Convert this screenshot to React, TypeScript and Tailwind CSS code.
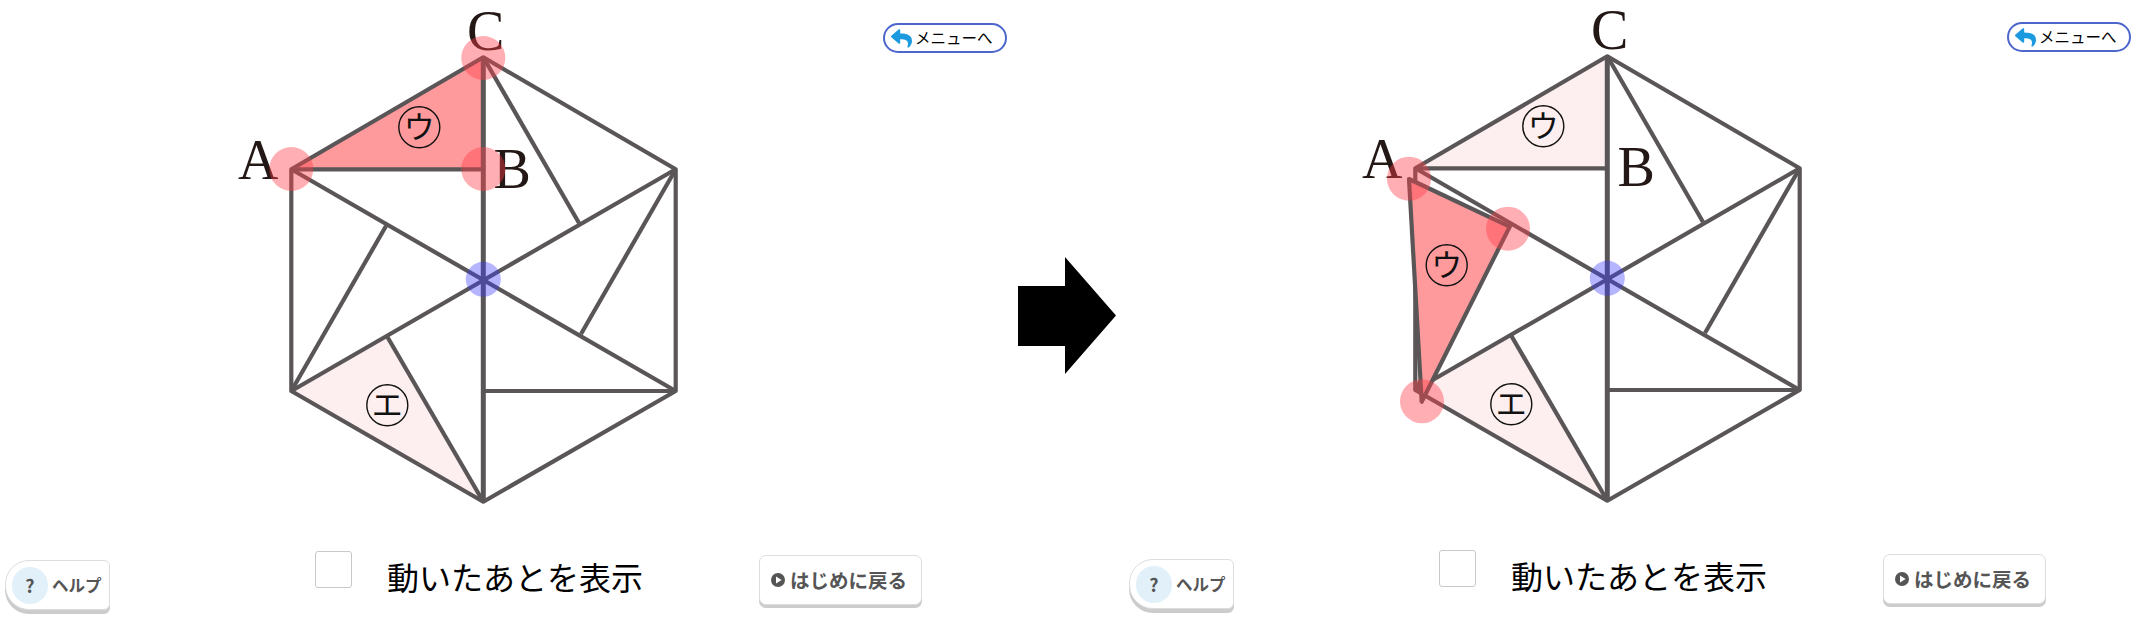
import React from 'react';
import { FaReply } from 'react-icons/fa';

const serif = '"Liberation Serif", serif';
const jp = '"Noto Sans CJK JP", "Noto Sans", sans-serif';

const LINE = '#5a5657';

// hexagon outline plus every fold line, in page pixels of the left panel
const HEX = '291.3,169.3 483.3,57.3 675.7,169.3 675.7,391 483.3,501.7 291.3,391';
const SEGMENTS = [
  [483.3, 57.3, 483.3, 501.7],
  [291.3, 169.3, 675.7, 391],
  [675.7, 169.3, 291.3, 391],
  [291.3, 169.3, 483.3, 169.3],
  [483.3, 57.3, 579, 223],
  [675.7, 169.3, 581, 334],
  [675.7, 391, 483.3, 391],
  [483.3, 501.7, 387.3, 336.7],
  [291.3, 391, 386, 226],
];

const TRI_U = '291.3,169.3 483.3,57.3 483.3,169.3';
const TRI_E = '291.3,391 387.3,336.7 483.3,501.7';

const Kana = ({ x, y, ch }: { x: number; y: number; ch: string }) => (
  <g>
    <circle cx={x} cy={y} r={20.5} fill="none" stroke="#111" strokeWidth={1.4} />
    <text x={x} y={y + 11} textAnchor="middle" fontSize={31} fontWeight={400} fill="#111" style={{ fontFamily: jp }}>
      {ch}
    </text>
  </g>
);

const Letter = ({ x, y, ch }: { x: number; y: number; ch: string }) => (
  <text x={x} y={y} fontSize={56} fill="#231815" style={{ fontFamily: serif }}>
    {ch}
  </text>
);

const Marker = ({ x, y }: { x: number; y: number }) => <circle cx={x} cy={y} r={22} fill="#ff3f4a" fillOpacity={0.42} />;

const Diagram = ({ moved }: { moved: boolean }) => (
  <svg width={740} height={520} className="block shrink-0">
    <polygon points={TRI_E} fill="#fdeeef" />
    <polygon points={TRI_U} fill={moved ? '#fdeeef' : '#ff9a9c'} />
    {SEGMENTS.map((s, i) => (
      <line key={i} x1={s[0]} y1={s[1]} x2={s[2]} y2={s[3]} stroke={LINE} strokeWidth={i === 0 ? 5 : 4.2} />
    ))}
    <polygon points={HEX} fill="none" stroke={LINE} strokeWidth={4.2} strokeLinejoin="round" />
    <Kana x={419.3} y={127.3} ch="ウ" />
    <Kana x={387.3} y={405.3} ch="エ" />
    <Letter x={238} y={moved ? 178.5 : 179} ch="A" />
    <Letter x={493.5} y={moved ? 187 : 187.7} ch="B" />
    <Letter x={467} y={50} ch="C" />
    {moved ? (
      <>
        <polygon points="285,180 385.7,227.7 297.7,402.7" fill="#ff9a9c" stroke={LINE} strokeWidth={4.2} strokeLinejoin="round" />
        <Kana x={322.7} y={266.3} ch="ウ" />
        <Marker x={285} y={179.7} />
        <Marker x={384} y={229.7} />
        <Marker x={298} y={402.3} />
      </>
    ) : (
      <>
        <Marker x={291.3} y={169} />
        <Marker x={483.3} y={169} />
        <Marker x={483.3} y={58} />
      </>
    )}
    <circle cx={483.3} cy={279.3} r={17.5} fill="#3b3bff" fillOpacity={0.38} />
  </svg>
);

const Panel = ({ moved, className }: { moved: boolean; className: string }) => (
  <div className={`flex flex-col shrink-0 ${className}`} style={{ fontFamily: jp }}>
    <div className="flex items-start h-[551px]">
      <Diagram moved={moved} />
      <button className="mt-[23px] ml-[143px] w-[124px] h-[30px] flex items-center gap-[3px] pl-[6px] bg-white border-2 border-[#4c66cc] rounded-full">
        <FaReply className="w-[21px] h-[21px] text-[#1b9ae0]" />
        <span className="text-[15.5px] leading-none font-normal text-black whitespace-nowrap">メニューへ</span>
      </button>
    </div>
    <div className="flex items-start">
      <button className="mt-[9px] ml-[5px] w-[105px] h-[50px] flex items-center pl-[6px] bg-white border border-[#dddddd] rounded-l-[24px] rounded-r-[6px] shadow-[0_4px_0_#cccccc]">
        <span className="w-[36px] h-[37px] rounded-full bg-[#e1f0f9] flex items-center justify-center text-[18px] font-bold text-[#555555]">?</span>
        <span className="ml-[4px] text-[16.5px] font-bold text-[#555555] whitespace-nowrap">ヘルプ</span>
      </button>
      <div className="ml-[205px] w-[37px] h-[37px] bg-white border border-[#c8c8c8] rounded-[3px]" />
      <span className="ml-[35px] mt-[3px] w-[256px] text-[32px] leading-[44px] font-normal text-black whitespace-nowrap">動いたあとを表示</span>
      <button className="mt-[4px] ml-[116px] w-[163px] h-[50px] flex items-center pl-[11px] bg-white border border-[#dddddd] rounded-[7px] shadow-[0_3px_0_#cccccc]">
        <svg width={14} height={14} viewBox="0 0 14 14" className="shrink-0">
          <circle cx={7} cy={7} r={7} fill="#555555" />
          <polygon points="5,3.6 10.6,7 5,10.4" fill="#ffffff" />
        </svg>
        <span className="ml-[5px] text-[19.5px] font-bold text-[#555555] whitespace-nowrap">はじめに戻る</span>
      </button>
    </div>
  </div>
);

export default function App() {
  return (
    <div className="flex items-start w-[2134px] h-[631px] overflow-hidden bg-white">
      <Panel moved={false} className="w-[1018px]" />
      <svg width={98} height={117} className="block shrink-0 mt-[257px]">
        <polygon points="0,29 47,29 47,0 98,58.5 47,117 47,89 0,89" fill="#000000" />
      </svg>
      <Panel moved className="w-[1010px] ml-2 -mt-px" />
    </div>
  );
}
